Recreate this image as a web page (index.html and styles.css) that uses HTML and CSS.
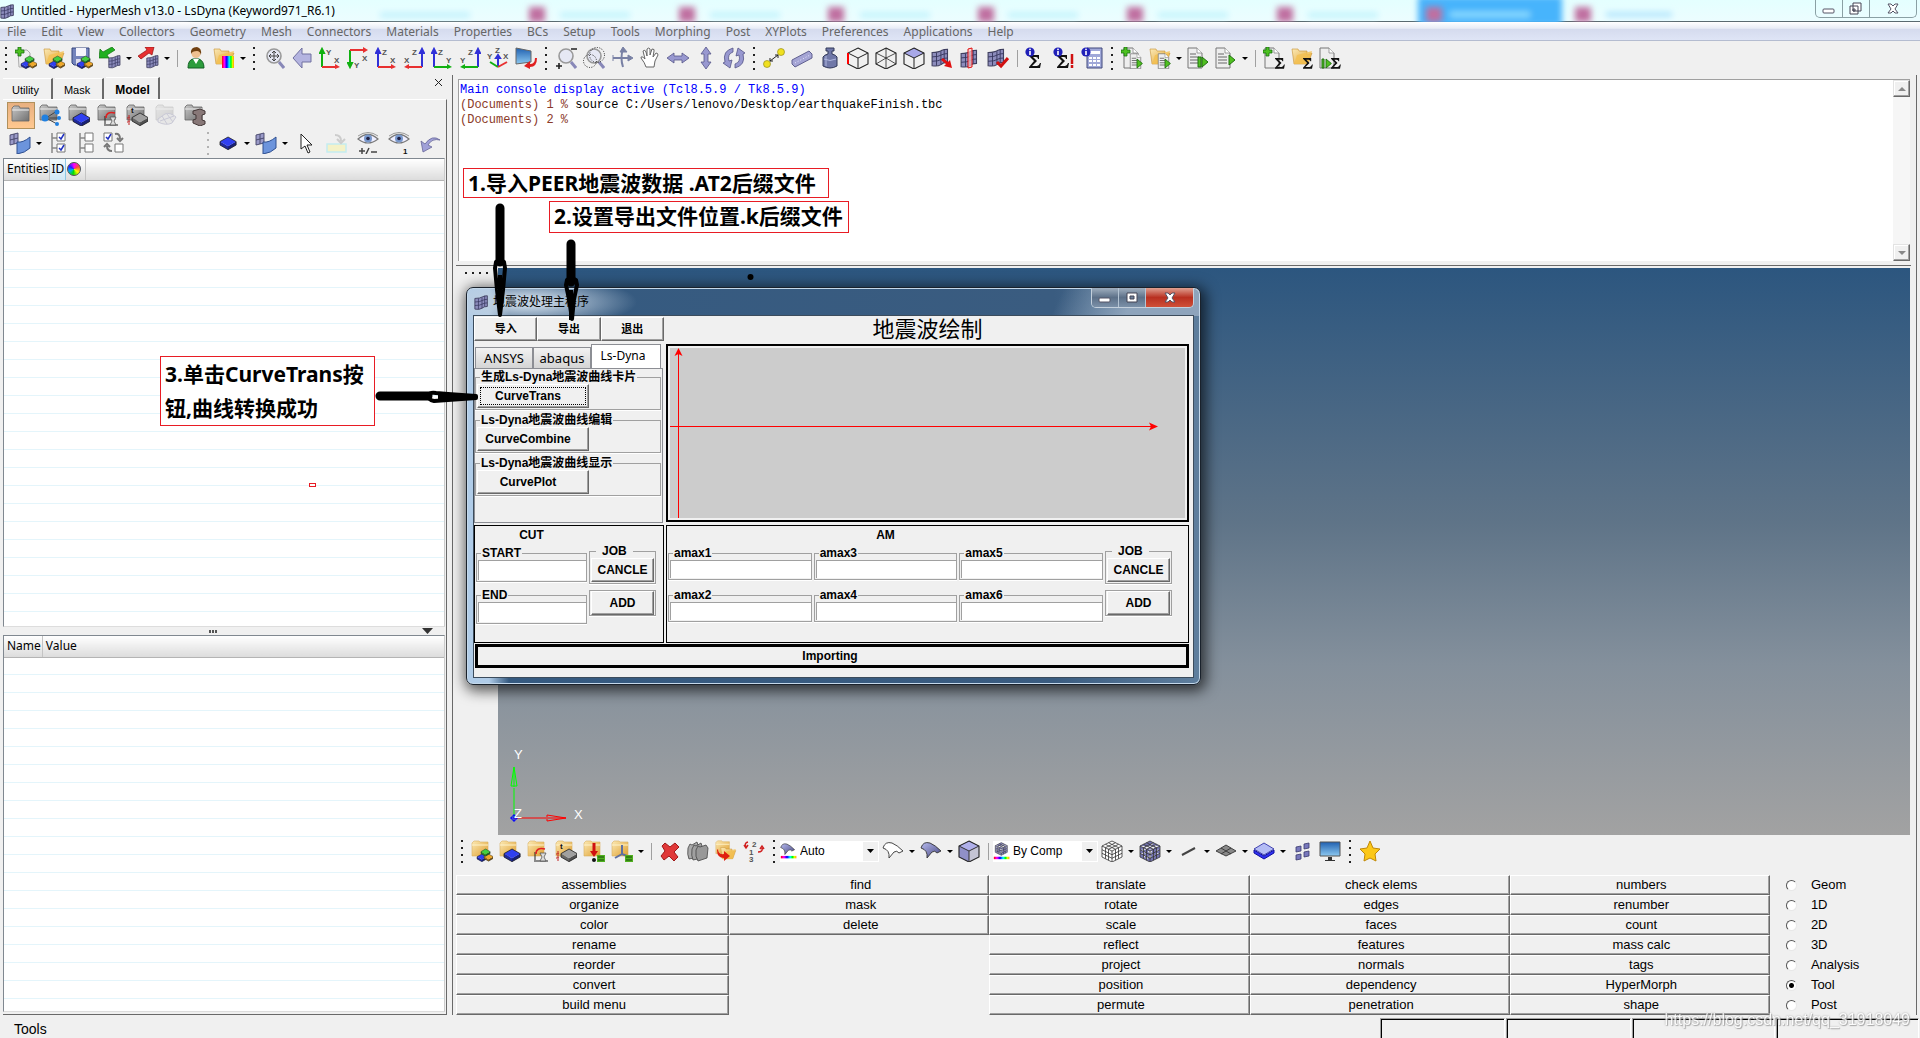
FILE: index.html
```html
<!DOCTYPE html>
<html lang="zh-CN">
<head>
<meta charset="utf-8">
<title>Untitled - HyperMesh v13.0 - LsDyna (Keyword971_R6.1)</title>
<link rel="stylesheet" href="styles.css">
</head>
<body>
<svg class="defs" aria-hidden="true">
  <defs>
    <linearGradient id="gy" x1="0" y1="0" x2="1" y2="1"><stop offset="0" stop-color="#fbe9b4"/><stop offset="1" stop-color="#e0a030"/></linearGradient>
    <linearGradient id="gg" x1="0" y1="0" x2="1" y2="1"><stop offset="0" stop-color="#c8c8c8"/><stop offset="1" stop-color="#707070"/></linearGradient>
    <linearGradient id="gb" x1="0" y1="0" x2="1" y2="1"><stop offset="0" stop-color="#b8bcf0"/><stop offset="1" stop-color="#45457f"/></linearGradient>
    <linearGradient id="gs" x1="0" y1="0" x2="0" y2="1"><stop offset="0" stop-color="#2060b0"/><stop offset="1" stop-color="#8cc8f0"/></linearGradient>
    <linearGradient id="rb" x1="0" y1="0" x2="1" y2="0"><stop offset="0" stop-color="#f00"/><stop offset=".2" stop-color="#f0f"/><stop offset=".4" stop-color="#00f"/><stop offset=".6" stop-color="#0ff"/><stop offset=".75" stop-color="#0f0"/><stop offset=".9" stop-color="#ff0"/><stop offset="1" stop-color="#f80"/></linearGradient>
    <g id="box"><path d="M0 4v3l7 4 7-4V4L7 8z" fill="currentColor"/><path d="M0 4v3l7 4V8z" fill="#000" opacity=".35"/><path d="M14 4v3l-7 4V8z" fill="#000" opacity=".5"/><path d="M7 0l7 4-7 4-7-4z" fill="currentColor"/><path d="M7 0l7 4v3l-7 4-7-4V4z" fill="none" stroke="#222" stroke-width=".7"/></g>
    <g id="trio"><use href="#box" class="c-blue" transform="translate(6 14) scale(.7)"/><use href="#box" class="c-orange" transform="translate(13 14) scale(.65)"/><use href="#box" class="c-green" transform="translate(10 9) scale(.65)"/></g>
    <g id="fold"><path d="M1 3l2-2h5l1 1h8v14H1z" fill="url(#gy)" stroke="#d8b060" stroke-width=".6"/><path d="M1 5h16" stroke="#fff4cc"/></g>
    <g id="ofold"><path d="M1 2h6l1 2h8v4l5-2-4 11H3z" fill="url(#gy)" stroke="#c89030" stroke-width=".6"/><path d="M6 8l15-4-4 13H3z" fill="#f4c050" opacity=".8"/></g>
    <g id="gfold"><path d="M1 3l2-2h5l1 2h9v13H1z" fill="url(#gg)" stroke="#666" stroke-width=".8"/><path d="M1 5h17" stroke="#eee"/></g>
    <g id="page"><path d="M3 1h9l5 5v15H3z" fill="#eee" stroke="#777"/><path d="M12 1v5h5" fill="#fff" stroke="#888" stroke-width=".8"/></g>
    <g id="lines"><path d="M5 7h6M5 10h9M5 13h9M5 16h9" stroke="#666" stroke-width="1.2"/></g>
    <g id="plus"><path d="M3 0h3v3h3v3H6v3H3V6H0V3h3z" fill="#4cc020" stroke="#187010" stroke-width=".8"/></g>
    <g id="mesh"><path d="M1 5q6 0 9-2 2-1 5-1v12q-4 0-6 2-3 2-8 1z" fill="#8c8cbc" stroke="#404060"/><path d="M1 9q6 0 9-2 2-1 5-1M1 13q6 0 9-2 2-1 5-1M5 5v12M9 4v12M12 2v12" stroke="#34345c" fill="none" stroke-width=".8"/></g>
    <g id="play"><path d="M0 0l6 5-6 5z" fill="#50c020" stroke="#207010"/></g>
    <g id="hex"><path d="M11 1l10 5v11l-10 5-10-5V6z" fill="none" stroke="#222" stroke-width="1.1"/></g>
    <g id="info"><circle cx="5" cy="5" r="4.6" fill="#2020b8"/><path d="M5 4v4" stroke="#fff" stroke-width="1.6"/><circle cx="5" cy="2.3" r=".9" fill="#fff"/></g>
    <g id="sigma"><path d="M0 0h10v4H9q0-2-2-2H4l4 4-5 5h5q2 0 3-3h1l-1 5H0v-1l5-6-5-5z" fill="#111"/></g>
    <g id="curve"><path d="M4 11v10M5 20h12" stroke="#222"/><path d="M5 13q0-7 9-5" fill="none" stroke="#e02020" stroke-width="1.5"/><path d="M9 12h6l-2 4 2 4H9l2-4z" fill="#ddd" stroke="#555" stroke-width=".8"/></g>
    <g id="eye"><path d="M1 7q10-9 20 0-10 8-20 0z" fill="#eef" stroke="#777" stroke-width="1.2"/><path d="M1 4q10-7 20 0" fill="none" stroke="#999"/><circle cx="11" cy="6.5" r="4" fill="#7898cc"/><circle cx="11" cy="6.5" r="1.8" fill="#224"/></g>
    <g id="mag"><circle cx="11" cy="9" r="7" fill="#e6e8f4" stroke="#999" stroke-width="1.6"/><path d="M16 15l5 6" stroke="#8888b8" stroke-width="3"/></g>
    <g id="surf"><path d="M1 8q2-7 9-5 5 2 11 8l-4 2q-2-3-5-1l-5 6q1-8-6-10z" stroke="#333" stroke-width=".9"/></g>
    <g id="cells"><path d="M11 1l10 5v11l-10 5-10-5V6z M1 6l10 5 10-5M11 11v11M4.500 4.300l10 5v11M7.500 2.700l10 5v11M17.500 4.300l-10 5v11M14.500 2.700l-10 5v11M1 9.700l10 5 10-5M1 13.300l10 5 10-5" stroke="#333" stroke-width=".8"/></g>
    <g id="sheet"><path d="M1 3l8-2v10l-8 2zM5 2v10M1 8l8-2" fill="#9a9ac8" stroke="#444468" stroke-width=".9"/><path d="M8 10q6 1 13-5v11q-5 5-13 6z" fill="#6c94dc" stroke="#305090"/></g>
    <g id="monitor"><path d="M1 2h20v14H1z" fill="url(#gs)" stroke="#555"/><path d="M9 17h4v3h3v1H6v-1h3z" fill="#333"/></g>

    <symbol id="i-new" viewBox="0 0 22 22"><path d="M3 3h9l3 3v14H4z" fill="#f0f0f0" stroke="#aaa"/><use href="#plus"/><use href="#trio"/></symbol>
    <symbol id="i-open" viewBox="0 0 22 22"><use href="#ofold"/><use href="#trio"/></symbol>
    <symbol id="i-save" viewBox="0 0 22 22"><path d="M1 1h17v17H3l-2-2z" fill="#7484bc" stroke="#34447c"/><path d="M5 1h10v8H5z" fill="#f4f4fc"/><path d="M5 12h8v6H5z" fill="#dde"/><use href="#trio"/></symbol>
    <symbol id="i-import" viewBox="0 0 22 22"><use href="#mesh" transform="translate(9 7) scale(.8)"/><path d="M13 0l3 3-8 5 2 3H0l1-9 3 3z" fill="#20b020" stroke="#107010" stroke-width=".7"/></symbol>
    <symbol id="i-export" viewBox="0 0 22 22"><use href="#mesh" transform="translate(9 7) scale(.8)"/><path d="M1 9l9-6-2-3h9l-2 8-3-2-8 6z" fill="#e83030" stroke="#901010" stroke-width=".7"/></symbol>
    <symbol id="i-user" viewBox="0 0 22 22"><path d="M3 21q0-8 5-9l6 0q5 2 5 9z" fill="#2c9c3c" stroke="#106020"/><path d="M8 12h6l-3 5z" fill="#fff"/><circle cx="11" cy="6.5" r="4.6" fill="#f0c090"/><path d="M6 7q-1-7 6-7 5 1 4 8-1-4-4-4-5 0-6 3z" fill="#704010"/></symbol>
    <symbol id="i-colors" viewBox="0 0 22 22"><use href="#ofold"/><path d="M9 9h12v12H9z" fill="url(#rb)"/></symbol>
    <symbol id="i-fit" viewBox="0 0 22 22"><use href="#mag"/><path d="M11 4v10M6 9h10M9 6l2-2 2 2M9 12l2 2 2-2M8 7L6 9l2 2M14 7l2 2-2 2" fill="none" stroke="#444"/></symbol>
    <symbol id="i-back" viewBox="0 0 22 22"><path d="M2 11l9-10v6h9v8h-9v6z" fill="#b4b4e0" stroke="#7070a0"/></symbol>
    <symbol id="i-yx" viewBox="0 0 22 22"><path d="M3 20V4M1 6l2-4 2 4z" stroke="#10b010" stroke-width="2" fill="#10b010"/><path d="M3 20h14" stroke="#e83030" stroke-width="2"/><path d="M16 17l5 3-5 2z" fill="#e83030"/><text x="7" y="8" class="ax">Y</text><text x="15" y="16" class="ax">X</text></symbol>
    <symbol id="i-yx2" viewBox="0 0 22 22"><path d="M3 3v14M1 16l2 4 2-4z" stroke="#10b010" stroke-width="2" fill="#10b010"/><path d="M3 3h14" stroke="#e83030" stroke-width="2"/><path d="M16 0l5 3-5 3z" fill="#e83030"/><text x="7" y="21" class="ax">Y</text><text x="15" y="14" class="ax">X</text></symbol>
    <symbol id="i-zx" viewBox="0 0 22 22"><path d="M3 20V4M1 6l2-4 2 4z" stroke="#3030d8" stroke-width="2" fill="#3030d8"/><path d="M3 20h14" stroke="#e83030" stroke-width="2"/><path d="M16 17l5 3-5 2z" fill="#e83030"/><text x="7" y="8" class="ax">Z</text><text x="15" y="16" class="ax">X</text></symbol>
    <symbol id="i-xz" viewBox="0 0 22 22"><path d="M19 20V4M17 6l2-4 2 4z" stroke="#3030d8" stroke-width="2" fill="#3030d8"/><path d="M19 20H5" stroke="#e83030" stroke-width="2"/><path d="M6 17l-5 3 5 2z" fill="#e83030"/><text x="9" y="8" class="ax">Z</text><text x="1" y="16" class="ax">X</text></symbol>
    <symbol id="i-zy" viewBox="0 0 22 22"><path d="M3 20V4M1 6l2-4 2 4z" stroke="#3030d8" stroke-width="2" fill="#3030d8"/><path d="M3 20h14" stroke="#10b010" stroke-width="2"/><path d="M16 17l5 3-5 2z" fill="#10b010"/><text x="7" y="8" class="ax">Z</text><text x="15" y="16" class="ax">Y</text></symbol>
    <symbol id="i-yz" viewBox="0 0 22 22"><path d="M19 20V4M17 6l2-4 2 4z" stroke="#3030d8" stroke-width="2" fill="#3030d8"/><path d="M19 20H5" stroke="#10b010" stroke-width="2"/><path d="M6 17l-5 3 5 2z" fill="#10b010"/><text x="9" y="8" class="ax">Z</text><text x="1" y="16" class="ax">Y</text></symbol>
    <symbol id="i-iso" viewBox="0 0 22 22"><path d="M11 20V9M9 11l2-3 2 3z" stroke="#3030d8" stroke-width="2" fill="#3030d8"/><path d="M11 20l-8-5" stroke="#10b010" stroke-width="2"/><path d="M11 20l9-5" stroke="#e83030" stroke-width="2"/><text x="0" y="12" class="ax">Y</text><text x="8" y="6" class="ax">Z</text><text x="16" y="12" class="ax">X</text></symbol>
    <symbol id="i-view" viewBox="0 0 22 22"><path d="M1 1l15 3v11L1 17z" fill="url(#gs)" stroke="#666"/><path d="M20 11q0 6-5 6v-3l-6 5 6 3v-2q7 0 7-9z" fill="#e02020"/></symbol>
    <symbol id="i-zoom" viewBox="0 0 22 22"><use href="#mag"/><path d="M16 2h6M1 19h6M4 16v6" stroke="#222" stroke-width="1.6"/></symbol>
    <symbol id="i-zoomc" viewBox="0 0 22 22"><use href="#mag"/><circle cx="14" cy="8" r="7.5" fill="none" stroke="#222" stroke-dasharray="1 1.5"/><circle cx="7" cy="14" r="6.5" fill="none" stroke="#222" stroke-dasharray="1 1.5"/></symbol>
    <symbol id="i-rot" viewBox="0 0 22 22"><path d="M2 11h18M12 2q-3 9 0 18" fill="none" stroke="#7880a4" stroke-width="2"/><path d="M12 0l4 5H9zM22 11l-5-3v6zM2 8v6" fill="#7880a4" stroke="#7880a4"/></symbol>
    <symbol id="i-hand" viewBox="0 0 22 22"><path d="M7 20q-1-4-5-9 0-3 4 1L4 4q2-2 3 1l1 4V2q2-2 3 0v6l2-6q3 0 2 2l-1 6 3-4q2 0 2 2-4 6-4 12z" fill="#fff" stroke="#666"/></symbol>
    <symbol id="i-lr" viewBox="0 0 22 22"><path d="M0 11l7-5v3h8V6l7 5-7 5v-3H7v3z" fill="#9898d0" stroke="#555588" stroke-width=".8"/></symbol>
    <symbol id="i-ud" viewBox="0 0 22 22"><path d="M11 0l5 7h-3v8h3l-5 7-5-7h3V7H6z" fill="#9898d0" stroke="#555588" stroke-width=".8"/></symbol>
    <symbol id="i-spin" viewBox="0 0 22 22"><path d="M10 1q-11 3-8 14l-2 1 7 5 2-8-3 1q-2-7 4-9zM12 21q11-3 8-14l2-1-7-5-2 8 3-1q2 7-4 9z" fill="#9898d0" stroke="#555588" stroke-width=".8"/></symbol>
    <symbol id="i-dist" viewBox="0 0 22 22"><path d="M7 14l8-6M7 11v3h3M12 8h3v3" stroke="#222" fill="none"/><circle cx="4" cy="17" r="3.5" fill="#f0e020" stroke="#888010" stroke-width=".6"/><circle cx="18" cy="5" r="3.5" fill="#f0e020" stroke="#888010" stroke-width=".6"/></symbol>
    <symbol id="i-ruler" viewBox="0 0 22 22"><path d="M1 13L18 4l3 3v4L4 20l-3-3z" fill="#a4a4d4" stroke="#606090"/><path d="M4 16l15-8" stroke="#e8e8ff" stroke-dasharray="1 2"/></symbol>
    <symbol id="i-weight" viewBox="0 0 22 22"><path d="M7 1h8v3h-2v3q4 1 5 3v9q-7 4-14 0v-9q1-2 5-3V4H7z" fill="#7078a8" stroke="#303858"/><path d="M5 12q6 3 12 0M7 9v10" stroke="#b0b8e0" fill="none"/></symbol>
    <symbol id="i-cuber" viewBox="0 0 22 22"><use href="#hex"/><path d="M1 6l10 5 10-5M11 11v11" fill="none" stroke="#222"/><path d="M1 6v11" stroke="#f00" stroke-width="2"/></symbol>
    <symbol id="i-cubew" viewBox="0 0 22 22"><use href="#hex"/><path d="M1 6l10 5 10-5M11 1v21M1 17l10-6 10 6" fill="none" stroke="#222" stroke-width=".8"/></symbol>
    <symbol id="i-cubet" viewBox="0 0 22 22"><path d="M11 1l10 5-10 5L1 6z" fill="#a8a8e8"/><use href="#hex"/><path d="M1 6l10 5 10-5M11 11v11" fill="none" stroke="#222"/></symbol>
    <symbol id="i-cube" viewBox="0 0 22 22"><path d="M11 1l10 5v11l-10 5-10-5V6z" fill="#9090c8"/><path d="M11 1l10 5-10 5L1 6z" fill="#b0b0ea"/><path d="M11 11l10-5v11l-10 5z" fill="#c4c4d4"/><use href="#hex"/><path d="M1 6l10 5 10-5M11 11v11" fill="none" stroke="#333"/></symbol>
    <symbol id="i-mesha" viewBox="0 0 22 22"><use href="#mesh" transform="scale(1.1)"/><path d="M12 11l5 4 2-2 2 8-8-2 2-2-5-4z" fill="#e01010"/></symbol>
    <symbol id="i-meshs" viewBox="0 0 22 22"><use href="#mesh" transform="translate(1 1) scale(1.1)"/><path d="M9 2l4-1v19l-4 1z" fill="#fcc" fill-opacity=".7" stroke="#e01010"/></symbol>
    <symbol id="i-meshc" viewBox="0 0 22 22"><use href="#mesh" transform="scale(1.1)"/><path d="M10 15l4 4 7-8" fill="none" stroke="#d01010" stroke-width="3"/></symbol>
    <symbol id="i-sum" viewBox="0 0 22 22"><use href="#sigma" transform="translate(4 8)"/><use href="#info"/></symbol>
    <symbol id="i-sume" viewBox="0 0 22 22"><use href="#sigma" transform="translate(4 8)"/><use href="#info"/><path d="M19 7v10M19 18v3" stroke="#d01010" stroke-width="2.5"/></symbol>
    <symbol id="i-calc" viewBox="0 0 22 22"><path d="M6 1h15v20H6z" fill="#a0a8d8" stroke="#40487c"/><path d="M8 4h11v3H8zM8 10h3v2H8zM12 10h3v2h-3zM16 10h3v2h-3zM8 13h3v2H8zM12 13h3v2h-3zM16 13h3v2h-3zM8 17h3v2H8zM12 17h3v2h-3zM16 17h3v2h-3z" fill="#fff"/><use href="#info"/></symbol>
    <symbol id="i-snew" viewBox="0 0 22 22"><use href="#page"/><use href="#page" transform="translate(7 6) scale(.75)"/><use href="#lines" transform="translate(7 6) scale(.75)"/><use href="#plus"/><use href="#play" transform="translate(16 12) scale(.9)"/></symbol>
    <symbol id="i-sopen" viewBox="0 0 22 22"><use href="#ofold"/><use href="#page" transform="translate(7 6) scale(.75)"/><use href="#lines" transform="translate(7 6) scale(.75)"/><use href="#play" transform="translate(16 12) scale(.9)"/></symbol>
    <symbol id="i-srun" viewBox="0 0 22 22"><use href="#page" transform="translate(-2)"/><use href="#lines" transform="translate(-2)"/><path d="M11 10h3v10h-3z" fill="#50c020" stroke="#207010"/><use href="#play" transform="translate(15 10)"/></symbol>
    <symbol id="i-splay" viewBox="0 0 22 22"><use href="#page" transform="translate(-2)"/><use href="#lines" transform="translate(-2)"/><use href="#play" transform="translate(14 8)"/></symbol>
    <symbol id="i-tnew" viewBox="0 0 22 22"><use href="#page" transform="translate(-1 0)"/><use href="#plus"/><use href="#sigma" transform="translate(12 11) scale(.82)"/></symbol>
    <symbol id="i-topen" viewBox="0 0 22 22"><use href="#ofold"/><use href="#sigma" transform="translate(12 11) scale(.82)"/></symbol>
    <symbol id="i-tplay" viewBox="0 0 22 22"><use href="#page" transform="translate(-2)"/><path d="M3 12h2v9H3z" fill="#50c020" stroke="#207010"/><use href="#play" transform="translate(7 12) scale(.9)"/><use href="#sigma" transform="translate(12 11) scale(.82)"/></symbol>
    <symbol id="i-gf" viewBox="0 0 22 22"><use href="#gfold" transform="translate(1 1)"/></symbol>
    <symbol id="i-gtree" viewBox="0 0 22 22"><use href="#gfold"/><path d="M18 7L7 14l11 6M7 14h12" stroke="#444" fill="none"/><circle cx="6" cy="14" r="3.5" fill="#2080e0"/><circle cx="18" cy="8" r="2.5" fill="#2080e0"/><circle cx="20" cy="14" r="2" fill="#2080e0"/><circle cx="18" cy="20" r="2" fill="#2080e0"/></symbol>
    <symbol id="i-gblue" viewBox="0 0 22 22"><use href="#gfold"/><use href="#box" class="c-blue" transform="translate(5 9) scale(1.2)"/></symbol>
    <symbol id="i-gcurve" viewBox="0 0 22 22"><use href="#gfold"/><use href="#curve" transform="translate(4 1)"/></symbol>
    <symbol id="i-ggray" viewBox="0 0 22 22"><use href="#gfold"/><use href="#box" class="c-gray" transform="translate(6 9) scale(1.15)"/><text x="5" y="9" class="ax dark">t</text><path d="M3 11v10M1 14h4M1 18h4" stroke="#c02020" stroke-dasharray="3 1"/></symbol>
    <symbol id="i-gpale" viewBox="0 0 22 22"><g opacity=".25"><use href="#gfold"/><path d="M3 15l7-5q5-2 11 3l-4 6q-6 3-14-1zM7 12l5 8M12 10l6 8M5 17l14-5" fill="#ccc" stroke="#558"/></g></symbol>
    <symbol id="i-gbeam" viewBox="0 0 22 22"><use href="#gfold"/><path d="M9 7l7-2 5 2v3l-3 1v5l3 1v3l-5 2-7-3v-3l3-1v-4l-3-1z" fill="#887878" stroke="#443838"/></symbol>
    <symbol id="i-sheet" viewBox="0 0 22 22"><use href="#sheet"/></symbol>
    <symbol id="i-chk" viewBox="0 0 22 22"><path d="M5 1v20M5 6h5M5 16h5" stroke="#888" stroke-width="1.5"/><path d="M10 1h8v8h-8zM10 12h8v8h-8z" fill="#fff" stroke="#777"/><path d="M12 5l2 2 3-5M12 16l2 2 3-5" stroke="#2030c0" stroke-width="1.5" fill="none"/></symbol>
    <symbol id="i-unchk" viewBox="0 0 22 22"><path d="M5 1v20M5 6h5M5 16h5" stroke="#888" stroke-width="1.5"/><path d="M10 1h8v8h-8zM10 12h8v8h-8z" fill="#fff" stroke="#777"/></symbol>
    <symbol id="i-swap" viewBox="0 0 22 22"><path d="M1 1h8v8H1zM12 12h8v8h-8z" fill="#fff" stroke="#777"/><path d="M3 5l2 2 3-5" stroke="#2030c0" stroke-width="1.5" fill="none"/><path d="M12 2q5-1 5 5M14 6l3 3 3-3M9 19q-5 0-5-5M1 15l3-3 3 3" stroke="#777" stroke-width="2" fill="none"/></symbol>
    <symbol id="i-blue" viewBox="0 0 22 22"><use href="#box" class="c-blue" transform="translate(3 5) scale(1.15)"/></symbol>
    <symbol id="i-cursor" viewBox="0 0 22 22"><path d="M6 2v15l4-3 3 7 2-1-3-7h5z" fill="#fff" stroke="#222"/></symbol>
    <symbol id="i-pale" viewBox="0 0 22 22"><path d="M1 12h19v8H1z" fill="#f4f2c8" stroke="#c4ecf0" stroke-width="1.5"/><path d="M9 3q6 0 6 6M11 7l4 4 4-4" fill="none" stroke="#ccc" stroke-width="2"/></symbol>
    <symbol id="i-eye1" viewBox="0 0 22 22"><use href="#eye"/><path d="M2 19h6M5 16v6M9 22l3-6M14 20h6" stroke="#444" stroke-width="1.5"/></symbol>
    <symbol id="i-eye2" viewBox="0 0 22 22"><use href="#eye"/><text x="15" y="22" class="ax dark">1</text></symbol>
    <symbol id="i-undo" viewBox="0 0 22 22"><path d="M21 8q-8-6-15 4l-4-3 2 11 9-5-4-2q4-7 12-5z" fill="#a0a0d8" stroke="#666698" stroke-width=".8"/></symbol>
    <symbol id="f-trio" viewBox="0 0 22 22"><use href="#fold"/><use href="#trio"/></symbol>
    <symbol id="f-blue" viewBox="0 0 22 22"><use href="#fold"/><use href="#box" class="c-blue" transform="translate(5 9) scale(1.15)"/></symbol>
    <symbol id="f-curve" viewBox="0 0 22 22"><use href="#fold"/><use href="#curve" transform="translate(4 1)"/></symbol>
    <symbol id="f-gray" viewBox="0 0 22 22"><use href="#fold"/><use href="#box" class="c-gray" transform="translate(6 9) scale(1.15)"/><text x="5" y="9" class="ax dark">t</text><path d="M3 11v10M1 14h4M1 18h4" stroke="#c02020" stroke-dasharray="3 1"/></symbol>
    <symbol id="f-load" viewBox="0 0 22 22"><use href="#fold"/><path d="M11 3v9" stroke="#d01010" stroke-width="3"/><path d="M7 11h8l-4 6z" fill="#d01010"/><circle cx="11" cy="20" r="2" fill="#111"/><path d="M14 15h8v7h-8z" fill="#50b020"/><path d="M15 17h6M15 20h6" stroke="#185008"/></symbol>
    <symbol id="f-sys" viewBox="0 0 22 22"><use href="#fold"/><path d="M11 5v9l-7 4M11 14l5 2" stroke="#6070a0" stroke-width="2" fill="none"/><path d="M14 15h8v7h-8z" fill="#50b020"/><path d="M15 17h6M15 20h6" stroke="#185008"/></symbol>
    <symbol id="i-del" viewBox="0 0 22 22"><path d="M3 6l3-3 5 4 5-4 4 4-5 5 4 5-4 4-5-5-5 4-3-4 4-5z" fill="#e03838" stroke="#a01818"/></symbol>
    <symbol id="i-cards" viewBox="0 0 22 22"><path d="M1 8l2-4 2 1 5-3 1 3v12l-9 2q-2-4-1-11z" fill="#aaa" stroke="#444" stroke-width=".8"/><path d="M5 9l2-4 2 1 5-3 1 3v12l-9 2q-2-4-1-11z" fill="#a0a0a0" stroke="#444" stroke-width=".8"/><path d="M9 10l2-4 2 1 6-2 2 3-1 10-9 3q-3-4-2-11z" fill="#989898" stroke="#444" stroke-width=".8"/></symbol>
    <symbol id="i-fmove" viewBox="0 0 22 22"><use href="#fold" transform="scale(.85)"/><use href="#ofold" transform="translate(5 6) scale(.75)"/><path d="M3 9q0 6 6 5v-3l6 5-6 5v-3q-7 0-7-8z" fill="#e02010"/></symbol>
    <symbol id="i-renum" viewBox="0 0 22 22"><text x="9" y="7" class="ax">2</text><text x="6" y="15" class="ax">1</text><text x="6" y="22" class="ax">3</text><path d="M5 2q-4 1-2 5M1 5l2 3 2-3M15 12q5 0 4-4M17 9l2-3 2 3" fill="none" stroke="#d02020" stroke-width="1.5"/></symbol>
    <symbol id="i-auto" viewBox="0 0 22 22"><use href="#surf" fill="url(#gb)" transform="scale(.85)"/><path d="M1 17h19v3H1z" fill="url(#rb)"/></symbol>
    <symbol id="i-surfw" viewBox="0 0 22 22"><use href="#surf" fill="#fff"/></symbol>
    <symbol id="i-surf" viewBox="0 0 22 22"><use href="#surf" fill="url(#gb)"/></symbol>
    <symbol id="i-comp" viewBox="0 0 22 22"><use href="#cells" fill="#8484bc" transform="translate(2 0) scale(.74)"/><path d="M1 18h19v3H1z" fill="url(#rb)"/></symbol>
    <symbol id="i-cellw" viewBox="0 0 22 22"><use href="#cells" fill="#fff"/></symbol>
    <symbol id="i-cell" viewBox="0 0 22 22"><use href="#cells" fill="#7474b0"/></symbol>
    <symbol id="i-line" viewBox="0 0 22 22"><path d="M5 15l13-7" stroke="#444" stroke-width="2"/></symbol>
    <symbol id="i-flat" viewBox="0 0 22 22"><path d="M11 5l10 6-10 5L1 11zM6 8l10 6M16 8L6 14" fill="#888" stroke="#333" stroke-width=".9"/></symbol>
    <symbol id="i-shell" viewBox="0 0 22 22"><path d="M1 10l10 6 10-6v3l-10 6-10-6z" fill="#3030f0" stroke="#1010a0"/><path d="M11 3l10 6-10 6-10-6z" fill="#b4bcf4" stroke="#2020a0" stroke-width=".8"/></symbol>
    <symbol id="i-quads" viewBox="0 0 22 22"><path d="M5 7l5-1v5l-5 1zM13 4l5-1v5l-5 1zM5 15l5-1v5l-5 1zM13 12l5-1v5l-5 1z" fill="#7878bc" stroke="#38386c" stroke-width=".8"/></symbol>
    <symbol id="i-mon" viewBox="0 0 22 22"><use href="#monitor"/></symbol>
    <symbol id="i-star" viewBox="0 0 22 22"><path d="M11 1l3 7 7 1-5 5 1 7-6-3-6 3 1-7-5-5 7-1z" fill="#fcc818" stroke="#c08808"/></symbol>
    <symbol id="i-mesh" viewBox="0 0 18 18"><use href="#mesh"/></symbol>
    <symbol id="i-car" viewBox="0 0 6 3"><path d="M0 0h6L3 3z" fill="#000"/></symbol>
  </defs>
</svg>

<header class="titlebar">
  <svg class="glass" width="100%" height="22" aria-hidden="true">
    <defs><filter id="bl" x="-50%" y="-50%" width="200%" height="200%"><feGaussianBlur stdDeviation="3"/></filter></defs>
    <g filter="url(#bl)">
      <rect x="380" y="12" width="90" height="6" fill="#c4f2fc"/><rect x="560" y="12" width="70" height="6" fill="#c4f4fc"/><rect x="710" y="12" width="70" height="6" fill="#c4f4fc"/><rect x="860" y="12" width="70" height="6" fill="#c4f4fc"/><rect x="1008" y="12" width="70" height="6" fill="#c4f4fc"/><rect x="1158" y="12" width="70" height="6" fill="#c4f4fc"/><rect x="1308" y="12" width="70" height="6" fill="#c4f4fc"/>
      <rect x="1418" y="-4" width="144" height="30" fill="#46b4fc"/><rect x="1450" y="12" width="80" height="5" fill="#90e0ff"/><rect x="1606" y="12" width="66" height="5" fill="#b0e4fc"/><rect x="30" y="16" width="160" height="4" fill="#e4dcf4"/>
    </g>
    <g fill="#c070a0" filter="url(#bl)"><rect x="529" y="7" width="16" height="15"/><rect x="679" y="7" width="16" height="15"/><rect x="828" y="7" width="16" height="15"/><rect x="978" y="7" width="16" height="15"/><rect x="1127" y="7" width="16" height="15"/><rect x="1277" y="7" width="16" height="15"/><rect x="1426" y="7" width="16" height="15"/><rect x="1575" y="7" width="16" height="15"/></g>
  </svg>
  <svg class="appicon"><use href="#i-mesh"/></svg>
  <h1>Untitled - HyperMesh v13.0 - LsDyna (Keyword971_R6.1)</h1>
  <div class="winbtns">
    <button aria-label="Minimize"><svg width="14" height="14"><rect x="1" y="7" width="11" height="4" rx="1" fill="#fff" stroke="#556"/></svg></button>
    <button aria-label="Restore"><svg width="14" height="14"><path d="M4 1h8v8H4zM1 4h8v8H1z" fill="#fff" stroke="#445"/><path d="M4 7h2v2H4z" fill="none" stroke="#445"/></svg></button>
    <button class="wide" aria-label="Close"><svg width="14" height="14"><path d="M2 2h3l2 2 2-2h3L9 7l3 4H9L7 9l-2 2H2l3-4z" fill="#fff" stroke="#556"/></svg></button>
  </div>
</header>

<nav class="menubar">
  <a href="#">File</a><a href="#">Edit</a><a href="#">View</a><a href="#">Collectors</a><a href="#">Geometry</a><a href="#">Mesh</a><a href="#">Connectors</a><a href="#">Materials</a><a href="#">Properties</a><a href="#">BCs</a><a href="#">Setup</a><a href="#">Tools</a><a href="#">Morphing</a><a href="#">Post</a><a href="#">XYPlots</a><a href="#">Preferences</a><a href="#">Applications</a><a href="#">Help</a>
</nav>

<div class="toolbar">
  <i class="grip"></i>
  <button class="tb" aria-label="New"><svg><use href="#i-new"/></svg></button>
  <button class="tb" aria-label="Open"><svg><use href="#i-open"/></svg></button>
  <button class="tb" aria-label="Save"><svg><use href="#i-save"/></svg></button>
  <button class="tb" aria-label="Import"><svg><use href="#i-import"/></svg></button>
  <button class="car" aria-label="Import options"><svg><use href="#i-car"/></svg></button>
  <button class="tb" aria-label="Export"><svg><use href="#i-export"/></svg></button>
  <button class="car" aria-label="Export options"><svg><use href="#i-car"/></svg></button>
  <i class="sep"></i>
  <button class="tb" aria-label="User profile"><svg><use href="#i-user"/></svg></button>
  <button class="tb" aria-label="Results"><svg><use href="#i-colors"/></svg></button>
  <button class="car" aria-label="Results options"><svg><use href="#i-car"/></svg></button>
  <i class="grip"></i>
  <button class="tb" aria-label="Fit"><svg><use href="#i-fit"/></svg></button>
  <button class="tb" aria-label="Previous view"><svg><use href="#i-back"/></svg></button>
  <button class="tb" aria-label="XY top"><svg><use href="#i-yx"/></svg></button>
  <button class="tb" aria-label="XY bottom"><svg><use href="#i-yx2"/></svg></button>
  <button class="tb" aria-label="XZ left"><svg><use href="#i-zx"/></svg></button>
  <button class="tb" aria-label="XZ right"><svg><use href="#i-xz"/></svg></button>
  <button class="tb" aria-label="YZ rear"><svg><use href="#i-zy"/></svg></button>
  <button class="tb" aria-label="YZ front"><svg><use href="#i-yz"/></svg></button>
  <button class="tb" aria-label="Isometric"><svg><use href="#i-iso"/></svg></button>
  <button class="tb" aria-label="Reverse view"><svg><use href="#i-view"/></svg></button>
  <i class="grip"></i>
  <button class="tb" aria-label="Zoom"><svg><use href="#i-zoom"/></svg></button>
  <button class="tb" aria-label="Circle zoom"><svg><use href="#i-zoomc"/></svg></button>
  <button class="tb" aria-label="Rotate"><svg><use href="#i-rot"/></svg></button>
  <button class="tb" aria-label="Pan"><svg><use href="#i-hand"/></svg></button>
  <button class="tb" aria-label="Rotate left right"><svg><use href="#i-lr"/></svg></button>
  <button class="tb" aria-label="Rotate up down"><svg><use href="#i-ud"/></svg></button>
  <button class="tb" aria-label="Spin"><svg><use href="#i-spin"/></svg></button>
  <i class="grip"></i>
  <button class="tb" aria-label="Distance"><svg><use href="#i-dist"/></svg></button>
  <button class="tb" aria-label="Length"><svg><use href="#i-ruler"/></svg></button>
  <button class="tb" aria-label="Mass"><svg><use href="#i-weight"/></svg></button>
  <button class="tb" aria-label="Edges"><svg><use href="#i-cuber"/></svg></button>
  <button class="tb" aria-label="Features"><svg><use href="#i-cubew"/></svg></button>
  <button class="tb" aria-label="Faces"><svg><use href="#i-cubet"/></svg></button>
  <button class="tb" aria-label="Normals"><svg><use href="#i-mesha"/></svg></button>
  <button class="tb" aria-label="Penetration"><svg><use href="#i-meshs"/></svg></button>
  <button class="tb" aria-label="Check elements"><svg><use href="#i-meshc"/></svg></button>
  <i class="sep"></i>
  <button class="tb" aria-label="Summary"><svg><use href="#i-sum"/></svg></button>
  <button class="tb" aria-label="Summary check"><svg><use href="#i-sume"/></svg></button>
  <button class="tb" aria-label="Calculator"><svg><use href="#i-calc"/></svg></button>
  <i class="grip"></i>
  <button class="tb" aria-label="New script"><svg><use href="#i-snew"/></svg></button>
  <button class="tb" aria-label="Open script"><svg><use href="#i-sopen"/></svg></button>
  <button class="car" aria-label="Recent scripts"><svg><use href="#i-car"/></svg></button>
  <button class="tb" aria-label="Step script"><svg><use href="#i-srun"/></svg></button>
  <button class="tb" aria-label="Run script"><svg><use href="#i-splay"/></svg></button>
  <button class="car" aria-label="Run options"><svg><use href="#i-car"/></svg></button>
  <i class="sep"></i>
  <button class="tb" aria-label="New template"><svg><use href="#i-tnew"/></svg></button>
  <button class="tb" aria-label="Open template"><svg><use href="#i-topen"/></svg></button>
  <button class="tb" aria-label="Run template"><svg><use href="#i-tplay"/></svg></button>
</div>

<main>
  <aside>
    <div class="tabs">
      <button>Utility</button><button>Mask</button><button class="on">Model</button>
      <button class="x" aria-label="Close panel"><svg width="8" height="8"><path d="M0 0l7 7M7 0L0 7" stroke="#222"/></svg></button>
    </div>
    <div class="browser">
      <div class="row modes">
        <button class="tb on" aria-label="Model view"><svg><use href="#i-gf"/></svg></button>
        <button class="tb" aria-label="Assembly view"><svg><use href="#i-gtree"/></svg></button>
        <button class="tb" aria-label="Component view"><svg><use href="#i-gblue"/></svg></button>
        <button class="tb" aria-label="Material view"><svg><use href="#i-gcurve"/></svg></button>
        <button class="tb" aria-label="Property view"><svg><use href="#i-ggray"/></svg></button>
        <button class="tb" aria-label="Include view"><svg><use href="#i-gpale"/></svg></button>
        <button class="tb" aria-label="Beam section view"><svg><use href="#i-gbeam"/></svg></button>
      </div>
      <div class="row">
        <button class="tb" aria-label="Elements and geometry"><svg><use href="#i-sheet"/></svg></button>
        <button class="car" aria-label="Display options"><svg><use href="#i-car"/></svg></button>
        <button class="tb" aria-label="Display all"><svg><use href="#i-chk"/></svg></button>
        <button class="tb" aria-label="Display none"><svg><use href="#i-unchk"/></svg></button>
        <button class="tb" aria-label="Display reverse"><svg><use href="#i-swap"/></svg></button>
        <div class="row actions">
          <i class="grip faint"></i>
          <button class="tb" aria-label="Components"><svg><use href="#i-blue"/></svg></button>
          <button class="car" aria-label="Component options"><svg><use href="#i-car"/></svg></button>
          <button class="tb" aria-label="Scope"><svg><use href="#i-sheet"/></svg></button>
          <button class="car" aria-label="Scope options"><svg><use href="#i-car"/></svg></button>
          <button class="tb big" aria-label="Selector"><svg><use href="#i-cursor"/></svg></button>
          <button class="tb big" aria-label="Add to include" disabled><svg><use href="#i-pale"/></svg></button>
          <button class="tb big" aria-label="Show hide"><svg><use href="#i-eye1"/></svg></button>
          <button class="tb big" aria-label="Isolate"><svg><use href="#i-eye2"/></svg></button>
          <button class="tb big" aria-label="Undo"><svg><use href="#i-undo"/></svg></button>
        </div>
      </div>
      <div class="list entities">
        <table><thead><tr><th>Entities</th><th class="sorted">ID</th><th class="wheel"><i></i></th><th class="rest"></th></tr></thead></table>
      </div>
      <div class="splitter"><i class="dots"></i><svg width="11" height="6"><path d="M0 0h11L5.500 6z" fill="#333"/></svg></div>
      <div class="list values">
        <table><thead><tr><th>Name</th><th class="rest">Value</th></tr></thead></table>
      </div>
    </div>
  </aside>

  <section class="work">
    <div class="console">
      <pre><span class="msg">Main console display active (Tcl8.5.9 / Tk8.5.9)</span>
<span class="prompt">(Documents) 1 %</span> source C:/Users/lenovo/Desktop/earthquakeFinish.tbc
<span class="prompt">(Documents) 2 %</span> </pre>
      <div class="scroll"><button aria-label="Scroll up"><svg width="8" height="4"><path d="M0 4h8L4 0z" fill="#888"/></svg></button><button aria-label="Scroll down"><svg width="8" height="4"><path d="M0 0h8L4 4z" fill="#888"/></svg></button></div>
    </div>
    <div class="stage">
      <div class="dock"><i></i></div>
      <div class="viewport">
        <svg class="triad" width="100" height="90">
          <path d="M16 73V43" stroke="#0f0"/><path d="M16 22l-3 19h6zM16 22v20" stroke="#0f0" fill="none"/>
          <path d="M16 73h32" stroke="#f00"/><path d="M68 73l-19-3v6zM68 73H50" stroke="#f00" fill="none"/>
          <circle cx="16" cy="73" r="2.5" fill="none" stroke="#00f"/><path d="M12 73h8M16 69v8" stroke="#00f"/>
          <text x="16" y="14">Y</text><text x="76" y="74">X</text><text x="16" y="73">Z</text>
        </svg>
      </div>
    </div>
    <div class="toolbar lower">
      <i class="grip"></i>
      <button class="tb" aria-label="Assemblies"><svg><use href="#f-trio"/></svg></button>
      <button class="tb" aria-label="Components"><svg><use href="#f-blue"/></svg></button>
      <button class="tb" aria-label="Materials"><svg><use href="#f-curve"/></svg></button>
      <button class="tb" aria-label="Properties"><svg><use href="#f-gray"/></svg></button>
      <button class="tb" aria-label="Load collectors"><svg><use href="#f-load"/></svg></button>
      <button class="tb" aria-label="System collectors"><svg><use href="#f-sys"/></svg></button>
      <button class="car" aria-label="More collectors"><svg><use href="#i-car"/></svg></button>
      <i class="sep"></i>
      <button class="tb" aria-label="Delete"><svg><use href="#i-del"/></svg></button>
      <button class="tb" aria-label="Card edit"><svg><use href="#i-cards"/></svg></button>
      <button class="tb" aria-label="Organize"><svg><use href="#i-fmove"/></svg></button>
      <button class="tb" aria-label="Renumber"><svg><use href="#i-renum"/></svg></button>
      <i class="grip"></i>
      <label class="combo"><svg class="cico"><use href="#i-auto"/></svg><select aria-label="Geometry color mode"><option>Auto</option></select><span><svg width="7" height="4"><path d="M0 0h7L3.500 4z"/></svg></span></label>
      <button class="tb" aria-label="Wireframe geometry"><svg><use href="#i-surfw"/></svg></button>
      <button class="car" aria-label="Wireframe options"><svg><use href="#i-car"/></svg></button>
      <button class="tb" aria-label="Shaded geometry"><svg><use href="#i-surf"/></svg></button>
      <button class="car" aria-label="Shaded options"><svg><use href="#i-car"/></svg></button>
      <button class="tb" aria-label="Transparency"><svg><use href="#i-cube"/></svg></button>
      <i class="sep"></i>
      <label class="combo"><svg class="cico"><use href="#i-comp"/></svg><select aria-label="Element color mode"><option>By Comp</option></select><span><svg width="7" height="4"><path d="M0 0h7L3.500 4z"/></svg></span></label>
      <button class="tb" aria-label="Wireframe elements"><svg><use href="#i-cellw"/></svg></button>
      <button class="car" aria-label="Wireframe element options"><svg><use href="#i-car"/></svg></button>
      <button class="tb" aria-label="Shaded elements"><svg><use href="#i-cell"/></svg></button>
      <button class="car" aria-label="Shaded element options"><svg><use href="#i-car"/></svg></button>
      <button class="tb" aria-label="1D display"><svg><use href="#i-line"/></svg></button>
      <button class="car" aria-label="1D options"><svg><use href="#i-car"/></svg></button>
      <button class="tb" aria-label="2D display"><svg><use href="#i-flat"/></svg></button>
      <button class="car" aria-label="2D options"><svg><use href="#i-car"/></svg></button>
      <button class="tb" aria-label="Layers"><svg><use href="#i-shell"/></svg></button>
      <button class="car" aria-label="Layer options"><svg><use href="#i-car"/></svg></button>
      <button class="tb" aria-label="Shrink"><svg><use href="#i-quads"/></svg></button>
      <button class="tb" aria-label="Visualization"><svg><use href="#i-mon"/></svg></button>
      <i class="grip"></i>
      <button class="tb" aria-label="Favorites"><svg><use href="#i-star"/></svg></button>
    </div>
    <div class="panel">
      <div class="col"><button>assemblies</button><button>organize</button><button>color</button><button>rename</button><button>reorder</button><button>convert</button><button>build menu</button></div>
      <div class="col"><button>find</button><button>mask</button><button>delete</button></div>
      <div class="col"><button>translate</button><button>rotate</button><button>scale</button><button>reflect</button><button>project</button><button>position</button><button>permute</button></div>
      <div class="col"><button>check elems</button><button>edges</button><button>faces</button><button>features</button><button>normals</button><button>dependency</button><button>penetration</button></div>
      <div class="col"><button>numbers</button><button>renumber</button><button>count</button><button>mass calc</button><button>tags</button><button>HyperMorph</button><button>shape</button></div>
      <div class="pages">
        <label><input type="radio" name="page">Geom</label><label><input type="radio" name="page">1D</label><label><input type="radio" name="page">2D</label><label><input type="radio" name="page">3D</label><label><input type="radio" name="page">Analysis</label><label><input type="radio" name="page" checked>Tool</label><label><input type="radio" name="page">Post</label>
      </div>
    </div>
  </section>
</main>

<footer>
  <span class="status">Tools</span>
  <i class="cell"></i><i class="cell"></i><i class="cell c3"></i><i class="cell c3"></i>
</footer>

<div class="dialog" role="dialog" aria-labelledby="dlg-title">
  <div class="dlg-bar">
    <svg class="appicon"><use href="#i-mesh"/></svg>
    <h2 id="dlg-title">地震波处理主程序</h2>
    <div class="dlg-btns">
      <button aria-label="Minimize"><svg width="14" height="14"><rect x="1" y="7" width="11" height="4" rx="1" fill="#fff" stroke="#556"/></svg></button>
      <button aria-label="Maximize"><svg width="14" height="14"><path d="M2 2h10v9H2z" fill="#fff" stroke="#445"/><path d="M5 5h4v3H5z" fill="#6a7f98" stroke="#445"/></svg></button>
      <button class="close" aria-label="Close"><svg width="14" height="14"><path d="M2 2h3l2 2 2-2h3L9 7l3 4H9L7 9l-2 2H2l3-4z" fill="#fff" stroke="#556"/></svg></button>
    </div>
  </div>
  <div class="client">
    <div class="cmds"><button class="tk">导入</button><button class="tk">导出</button><button class="tk">退出</button></div>
    <h3>地震波绘制</h3>
    <div class="notebook">
      <div class="ntabs"><button>ANSYS</button><button>abaqus</button><button class="on">Ls-Dyna</button></div>
      <div class="pane">
        <fieldset><legend>生成Ls-Dyna地震波曲线卡片</legend><button class="tk focus">CurveTrans</button></fieldset>
        <fieldset><legend>Ls-Dyna地震波曲线编辑</legend><button class="tk">CurveCombine</button></fieldset>
        <fieldset><legend>Ls-Dyna地震波曲线显示</legend><button class="tk">CurvePlot</button></fieldset>
      </div>
    </div>
    <div class="plot">
      <svg viewBox="0 0 515 170" preserveAspectRatio="none"><path d="M8.500 170V4M0 78.500h484" stroke="#f00" fill="none"/><path d="M8.500 0l4 8-4-2-4 2zM488 78.500l-9-4 2 4-2 4z" fill="#f00"/></svg>
    </div>
    <div class="frame cut">
      <h4>CUT</h4>
      <fieldset class="in"><legend><label for="start">START</label></legend><input id="start" type="text"></fieldset>
      <fieldset class="job"><legend>JOB</legend><button class="tk">CANCLE</button></fieldset>
      <fieldset class="in"><legend><label for="end">END</label></legend><input id="end" type="text"></fieldset>
      <div class="add"><button class="tk">ADD</button></div>
    </div>
    <div class="frame am">
      <h4>AM</h4>
      <fieldset class="in"><legend><label for="a1">amax1</label></legend><input id="a1" type="text"></fieldset>
      <fieldset class="in"><legend><label for="a3">amax3</label></legend><input id="a3" type="text"></fieldset>
      <fieldset class="in"><legend><label for="a5">amax5</label></legend><input id="a5" type="text"></fieldset>
      <fieldset class="job"><legend>JOB</legend><button class="tk">CANCLE</button></fieldset>
      <fieldset class="in"><legend><label for="a2">amax2</label></legend><input id="a2" type="text"></fieldset>
      <fieldset class="in"><legend><label for="a4">amax4</label></legend><input id="a4" type="text"></fieldset>
      <fieldset class="in"><legend><label for="a6">amax6</label></legend><input id="a6" type="text"></fieldset>
      <div class="add"><button class="tk">ADD</button></div>
    </div>
    <div class="progress">Importing</div>
  </div>
</div>

<p class="note n1">1.导入PEER地震波数据 .AT2后缀文件</p>
<p class="note n2">2.设置导出文件位置.k后缀文件</p>
<p class="note n3">3.单击CurveTrans按<br>钮,曲线转换成功</p>
<svg class="ink" width="900" height="600" aria-hidden="true">
  <path d="M500 208v54M571 244v38M380 396h48" stroke="#000" stroke-width="9" stroke-linecap="round"/>
  <path d="M496 262q4-4 8 0l1 6-2 22-3 25-3-25-2-22z" fill="none" stroke="#000" stroke-width="4" stroke-linejoin="round"/>
  <path d="M567 280q4-4 9 0l1 5-3 14-2 20-3-20-3-14z" fill="none" stroke="#000" stroke-width="4" stroke-linejoin="round"/>
  <path d="M500 275v40M571 290v30" stroke="#000" stroke-width="4"/>
  <path d="M428 395q2-3 8-2l12 1 28 2v2l-28 2-14 1q-6-1-6-6z" fill="none" stroke="#000" stroke-width="4" stroke-linejoin="round"/>
  <path d="M438 397h38" stroke="#000" stroke-width="5"/>
  <ellipse cx="750.5" cy="277" rx="3" ry="3" fill="#000"/>
  <rect x="309.5" y="483.5" width="6" height="3" fill="#fff" stroke="#e81c24"/>
</svg>
<p class="mark">https://blog.csdn.net/qq_31918049</p>
</body>
</html>
```
FILE: styles.css
```css
* { box-sizing: border-box; }
body {
  margin: 0;
  min-height: 100vh;
  display: flex;
  flex-direction: column;
  position: relative;
  overflow: hidden;
  background: #f0f0f0;
  color: #000;
  font: 12px/16px "Noto Sans", "Noto Sans CJK SC", sans-serif;
}
h1, h2, h3, h4, p, pre { margin: 0; font-weight: normal; }
button { font: inherit; color: inherit; margin: 0; padding: 0; border: 0; background: none; }
svg { display: block; }
.defs { position: absolute; width: 0; height: 0; }
.c-blue { color: #3040f0; }
.c-green { color: #40d040; }
.c-orange { color: #f0a828; }
.c-gray { color: #a0a0a0; }
.ax { font: bold 8px "Liberation Sans", sans-serif; fill: #555; }
.dark { fill: #111; }

/* title bar */
.titlebar {
  position: relative;
  display: flex;
  align-items: center;
  height: 22px;
  border-bottom: 1px solid #5a6a70;
  background: linear-gradient(#e4ffff, #ecfdff);
}
.glass { position: absolute; inset: 0; }
.appicon { width: 16px; height: 16px; flex: none; }
.titlebar .appicon, .titlebar h1 { position: relative; }
.titlebar h1 { margin-left: 5px; font-size: 12px; line-height: 20px; }
.winbtns {
  position: relative;
  display: flex;
  align-self: flex-start;
  margin: 0 3px 0 auto;
  height: 18px;
  border: 1px solid #8aa0a4;
  border-top: 0;
  border-radius: 0 0 5px 5px;
}
.winbtns button { width: 27px; display: grid; place-items: center; border-right: 1px solid #8aa0a4; }
.winbtns .wide { width: 46px; border-right: 0; }

.menubar {
  display: flex;
  gap: 15px;
  height: 19px;
  padding-left: 7px;
  border-bottom: 1px solid #b4bcd0;
  background: linear-gradient(#fff, #e8ecf6 35%, #d5dbee 40%, #dfe5f6);
  color: #666;
}
.menubar a { color: inherit; text-decoration: none; line-height: 19px; }

/* tool bars */
.toolbar { display: flex; align-items: center; height: 34px; }
.tb { width: 28px; height: 26px; flex: none; display: grid; place-items: center; }
.tb svg { width: 22px; height: 22px; }
.tb.big { width: 31px; }
.car { width: 10px; height: 26px; flex: none; display: grid; place-items: center; }
.car svg { width: 6px; height: 3px; }
.sep { width: 10px; flex: none; display: grid; place-items: center; }
.sep::before { content: ""; width: 1px; height: 17px; background: #a0a0a0; }
.grip { width: 12px; flex: none; display: grid; place-items: center; }
.grip::before {
  content: "";
  width: 2px;
  height: 23px;
  background: repeating-linear-gradient(#222 0 2px, transparent 2px 7px);
}
.grip.faint::before { opacity: .3; }

main { flex: 1; display: grid; grid-template-columns: 452px 1fr; margin-right: 3px; }

/* model browser */
aside { display: flex; flex-direction: column; padding: 0 5px 0 3px; }
.tabs {
  display: flex;
  align-items: flex-end;
  gap: 2px;
  height: 24px;
  font: 11px/18px "Liberation Sans", sans-serif;
}
.tabs button { padding: 2px 12px 0 9px; height: 21px; border-right: 2px solid #696969; border-top: 1px solid #fff; }
.tabs .on { font-weight: bold; font-size: 12px; height: 22px; padding: 2px 8px 0 9px; }
.tabs .x { margin: 0 4px 12px auto; padding: 0; height: 8px; border: 0; }
.browser {
  flex: 1;
  display: flex;
  flex-direction: column;
  padding: 1px 1px 2px 0;
  border: solid #696969;
  border-width: 0 1px 1px 0;
  border-top: 1px solid #fff;
}
.row { display: flex; align-items: center; height: 28px; padding-left: 3px; }
.row.modes { gap: 1px; padding-left: 4px; }
.modes .tb { height: 27px; }
.modes .on { border: 1px solid #b0905c; background: linear-gradient(#e8b080, #ffc890); }
.actions { margin-left: auto; }
.list {
  border: 1px solid #808890;
  border-right-color: #ccc;
  border-bottom-color: #ddd;
  background: repeating-linear-gradient(#fff 0 17px, #e4f5fb 17px 18px) 0 21px #fff;
}
.entities { margin-top: 1px; flex: 470 1 0; }
.values { flex: 377 1 0; }
.list table { width: 100%; border-collapse: collapse; line-height: 16px; }
.list th {
  height: 21px;
  padding: 0 1px 0 3px;
  border-right: 1px solid #c4c4c4;
  border-bottom: 1px solid #b4b4b4;
  background: linear-gradient(#fff, #dcdcdc);
  font-weight: normal;
  text-align: left;
}
.list th.rest { width: 100%; border-right: 0; }
.list th.sorted { padding: 0 1px; background: linear-gradient(#f2fafd, #d0e8f4); border-right-color: #8cc8e4; border-left: 1px solid #8cc8e4; }
.list th.wheel { padding-left: 1px; }
.wheel i { display: block; width: 14px; height: 14px; margin-right: 3px; border-radius: 50%; background: conic-gradient(#f0f, #f44 60deg, #ff0 130deg, #0d0 190deg, #0af 250deg, #22f 300deg, #f0f); border: 1px solid #555; }
.splitter { display: flex; align-items: center; height: 8px; padding-right: 12px; }
.dots { width: 8px; height: 3px; margin: 0 auto; background: repeating-linear-gradient(90deg, #555 0 2px, transparent 2px 3px); }

/* console and graphics area */
.work {
  display: flex;
  flex-direction: column;
  min-width: 0;
  border-left: 1px solid #696969;
  border-right: 1px solid #696969;
}
.console {
  display: flex;
  height: 182px;
  margin: 4px 6px 0 5px;
  border: 1px solid #a0a0a0;
  border-width: 1px 0 0 1px;
  background: #fff;
}
.console pre { flex: 1; padding: 3px 1px; font: 12px/15px "Liberation Mono", monospace; }
.msg { color: #00f; }
.prompt { color: #8b3a2a; }
.scroll { width: 17px; display: flex; flex-direction: column; justify-content: space-between; background: #f6f6f6; }
.scroll button { height: 17px; display: grid; place-items: center; background: #f0f0f0; border: 1px solid; border-color: #e3e3e3 #696969 #696969 #e3e3e3; box-shadow: inset -1px -1px #a0a0a0, inset 1px 1px #fff; }
.stage { flex: 1; display: flex; margin: 4px 5px 0 3px; border-top: 1px solid #696969; padding: 2px 1px 0 0; }
.dock { width: 42px; padding: 4px 0 0 9px; }
.dock i { display: block; width: 24px; height: 2px; background: repeating-linear-gradient(90deg, #222 0 2px, transparent 2px 7px); }
.viewport { flex: 1; display: flex; align-items: flex-end; background: linear-gradient(#2c567f, #5f7488 45%, #84909c 70%, #a2a2a2); }
.triad text { font: 13px "Liberation Sans", sans-serif; fill: #fff; }
.toolbar.lower { height: 32px; padding-left: 3px; margin-bottom: 8px; }
.combo { display: flex; align-items: center; height: 21px; width: 99px; flex: none; background: #fff; }
.sep + .combo { width: 105px; }
.cico { width: 18px; height: 20px; }
.combo select { flex: 1; min-width: 0; appearance: none; border: 0; padding: 0 0 0 2px; background: none; font: 12px/16px "Liberation Sans", sans-serif; color: #000; }
.combo span { width: 15px; height: 19px; margin-right: 1px; display: grid; place-items: center; background: #f0f0f0; }

.panel {
  display: grid;
  grid-template-columns: 273fr 260fr 260fr 260fr 260fr 146fr;
  margin-left: 3px;
  font: 13px/16px "Liberation Sans", sans-serif;
}
.col button {
  display: block;
  width: 100%;
  height: 20px;
  padding-left: 3px;
  border: 1px solid;
  border-color: #fff #696969 #696969 #fff;
  box-shadow: inset -1px -1px #a0a0a0;
}
.pages label { display: flex; align-items: center; gap: 14px; height: 20px; padding-left: 16px; }
.pages input {
  appearance: none;
  width: 11px;
  height: 11px;
  margin: 0;
  border: 1px solid;
  border-color: #555 #e8e8e8 #e8e8e8 #555;
  border-radius: 50%;
  background: #fff;
}
.pages input:checked { background: radial-gradient(#000 2px, #fff 3px); }

footer { display: flex; align-items: flex-start; margin-top: 3px; height: 20px; overflow: hidden; }
.status { flex: 1; padding-left: 14px; font: 14px/22px "Liberation Sans", sans-serif; }
.cell { width: 125px; height: 24px; margin-right: 1px; border: 1px solid #a0a0a0; border-right-color: #fff; box-shadow: inset 1px 1px #000; }
.cell.c3 { width: 143px; }

/* script window */
.dialog {
  position: absolute;
  left: 466px;
  top: 287px;
  width: 735px;
  padding: 0 6px 6px;
  border: 1px solid #1a222c;
  border-radius: 7px;
  background:
    radial-gradient(ellipse 110px 26px at 60px 14px, #c0d0e0 20%, transparent),
    linear-gradient(115deg, transparent 80%, #8ea4bc 90%) 0 0 / 100% 28px no-repeat,
    linear-gradient(90deg, #b0cce8 0 22px, #355a80 42px, #3a5c80 80%, #5f7f9e);
  box-shadow: inset 0 0 0 1px #c4d8ea, 2px 3px 14px 3px rgba(0, 0, 0, .65);
}
.dlg-bar { display: flex; align-items: center; height: 27px; padding-left: 1px; }
.dlg-bar h2 { margin-left: 3px; font-size: 12px; line-height: 16px; }
.dlg-btns { display: flex; align-self: flex-start; height: 20px; margin: 0 0 0 auto; border: 1px solid #c4d0dc; border-top: 0; border-radius: 0 0 5px 5px; overflow: hidden; }
.dlg-btns button { width: 27px; display: grid; place-items: center; border-right: 1px solid #b4c4d4; background: linear-gradient(#a0afbf, #5c7088 50%, #7b90a8); }
.dlg-btns .close { width: 47px; border-right: 0; background: linear-gradient(#e0a090, #b83020 50%, #d05038); }
.client {
  display: grid;
  grid-template-columns: 190px 1fr;
  grid-template-rows: 27px 181px 119px 24px;
  column-gap: 2px;
  padding: 1px 4px 9px 0;
  border: 1px solid #3c4c5c;
  background: #f0f0f0;
  font: bold 12px/14px "Liberation Sans", "Noto Sans CJK SC", sans-serif;
}
.tk {
  height: 24px;
  background: #f0f0f0;
  border: 1px solid;
  border-color: #fff #696969 #696969 #fff;
  box-shadow: inset -1px -1px #a0a0a0;
}
.cmds { display: flex; height: 24px; }
.cmds .tk { flex: 1; font-size: 11px; }
.client h3 { font-size: 22px; line-height: 26px; text-align: center; }
.notebook { display: flex; flex-direction: column; width: 189px; padding-bottom: 2px; }
.ntabs { display: flex; align-items: flex-end; height: 24px; padding-left: 1px; font: 13px/18px "Noto Sans", sans-serif; }
.ntabs button { width: 58px; height: 21px; border: 1px solid #8c8e94; border-bottom: 0; background: linear-gradient(#f2f2f2, #d4d4d4); }
.ntabs .on { width: 70px; height: 24px; padding: 0 6px 2px 0; background: #fff; font-size: 12px; }
.pane { flex: 1; display: flex; flex-direction: column; gap: 3px; padding: 1px 1px 0 0; border: 1px solid #8c8e94; }
.client fieldset { min-width: 0; margin: 0; padding: 0 1px 1px; border: 1px solid #a0a0a0; box-shadow: 0 1px #fff; }
.client legend { margin-left: 3px; padding: 0 1px; height: 14px; white-space: nowrap; }
.pane .tk { display: block; width: 112px; padding-right: 10px; }
.pane .focus { outline: 1px dotted #000; outline-offset: -4px; }
.plot { padding: 2px; border: 2px solid #000; margin-bottom: 3px; }
.plot svg { width: 100%; height: 100%; background: #ccc; }
.frame { display: grid; border: 1px solid #000; column-gap: 2px; align-items: start; padding: 0 1px; margin-bottom: 1px; }
.cut { grid-template-columns: 111px 67px; grid-template-rows: 18px 42px 40px; }
.am { grid-template-columns: repeat(3, 1fr) 67px; grid-template-rows: 18px 42px 40px; padding-right: 16px; }
.frame h4 { grid-column: 1 / -1; padding-right: 69px; font: inherit; line-height: 18px; text-align: center; }
.client .in { margin-top: 2px; padding-right: 0; }
.in input { display: block; width: 100%; height: 20px; padding: 0 2px; border: 1px solid #a0a0a0; border-right: 0; border-bottom: 0; background: #fff; font: inherit; }
.am .in input { height: 18px; }
.client .job legend { margin-left: 5px; padding: 0 6px; }
.job .tk, .add .tk { display: block; width: 100%; }
.add { border: 1px solid #a0a0a0; padding: 0 1px; margin-top: 4px; box-shadow: 0 1px #fff; }
.progress { grid-column: 1 / -1; margin-left: 1px; border: 3px solid #000; line-height: 18px; text-align: center; padding-right: 4px; }

/* walkthrough notes */
.note {
  position: absolute;
  border: 1px solid #e81c24;
  padding-left: 4px;
  background: #fff;
  font: bold 21px/28px "Noto Sans", "Noto Sans CJK SC", sans-serif;
  white-space: nowrap;
}
.n1 { left: 463px; top: 168px; width: 366px; }
.n2 { left: 549px; top: 201px; width: 300px; padding-bottom: 2px; }
.n3 { left: 160px; top: 356px; width: 215px; line-height: 34px; }
.ink { position: absolute; left: 0; top: 0; pointer-events: none; }
.mark {
  position: absolute;
  right: 10px;
  bottom: 8px;
  font: 16px/20px "Liberation Sans", sans-serif;
  color: #fff;
  opacity: .8;
  text-shadow: 0 0 2px #888, 1px 1px 1px #999;
}
```
